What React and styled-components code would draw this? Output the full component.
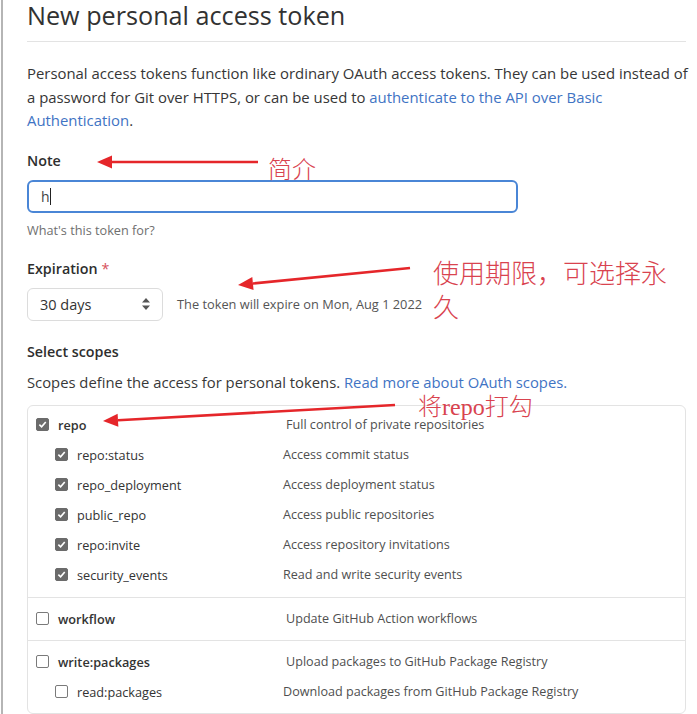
import React from 'react';
import styled, { createGlobalStyle } from 'styled-components';

const GlobalStyle = createGlobalStyle`
  body {
    margin: 0;
    background: #fff;
    font-family: "Open Sans", "Noto Sans", Arial, sans-serif;
    color: #333;
  }
`

const Root = styled.div`
  position: relative;
  width: 697px;
  height: 714px;
  overflow: hidden;
`

const Page = styled.div`
  height: 100%;
  border-left: 2px solid #b5b5b5;
  margin-left: 1px;
  padding: 0 11px 0 24px;
`

const Title = styled.h1`
  margin: 0;
  padding-bottom: 11px;
  border-bottom: 1px solid #e3e3e3;
  font-size: 25.2px;
  line-height: 30px;
  font-weight: 400;
  color: #323232;
`

const Intro = styled.p`
  margin: 20px -5px 0 0;
  font-size: 14.9px;
  line-height: 23.5px;
  color: #363636;
`

const Link = styled.a`
  color: #3f74c4;
  text-decoration: none;
`

const Label = styled.div`
  margin-top: ${p => p.$gap || 18}px;
  font-size: 14.3px;
  line-height: 20px;
  font-weight: 600;
  color: #2e2e2e;
`

const Required = styled.span`
  color: #d6505a;
  font-weight: 400;
`

const TextBox = styled.div`
  box-sizing: border-box;
  margin-top: 9px;
  width: 491px;
  height: 33px;
  border: 2px solid #4a86d6;
  border-radius: 6px;
  padding: 0 12px;
  display: flex;
  align-items: center;
  font-size: 14px;
  color: #444;
`

const Caret = styled.span`
  display: inline-block;
  width: 1px;
  height: 17px;
  background: #222;
`

const Hint = styled.div`
  margin-top: 8px;
  font-size: 12.7px;
  line-height: 18px;
  color: #6f6f6f;
`

const SelectRow = styled.div`
  margin-top: 9px;
  display: flex;
  align-items: center;
  gap: 14px;
`

const Select = styled.div`
  box-sizing: border-box;
  width: 136px;
  height: 33px;
  border: 1px solid #dcdcdc;
  border-radius: 6px;
  padding: 0 12px;
  display: flex;
  align-items: center;
  justify-content: space-between;
  font-size: 14.5px;
  color: #333;
`

const SelectArrows = styled.svg`
  width: 8px;
  height: 12px;
  fill: #555;
`

const Expire = styled.span`
  font-size: 12.8px;
  color: #555;
`

const Text = styled.div`
  margin-top: ${p => p.$gap || 10}px;
  font-size: 14.8px;
  line-height: 20px;
  color: #383838;
`

const ScopeBox = styled.div`
  margin-top: 13px;
  border: 1px solid #e3e3e3;
  border-radius: 6px;
`

const Group = styled.div`
  padding: 4px 0 6px;
  &:first-child {
    padding-bottom: 7px;
  }
  & + & {
    border-top: 1px solid #e3e3e3;
    padding-top: 6px;
  }
`

const Row = styled.div`
  display: grid;
  grid-template-columns: ${p => p.$child ? '228px' : '250px'} 1fr;
  height: 30px;
  align-items: center;
  padding-left: ${p => p.$child ? 27 : 8}px;
`

const ScopeName = styled.label`
  display: flex;
  align-items: center;
  gap: 9px;
  font-size: 12.7px;
  font-weight: ${p => p.$child ? 400 : 600};
  color: #333;
`

const Box = styled.span`
  box-sizing: border-box;
  width: 13px;
  height: 13px;
  border-radius: 2px;
  border: 1px solid ${p => p.$on ? '#6b6b6b' : '#7a7a7a'};
  background: ${p => p.$on ? '#6b6b6b' : '#fff'};
  display: flex;
  align-items: center;
  justify-content: center;
`

const ScopeDesc = styled.span`
  font-size: 12.6px;
  color: #4f4f4f;
`

const Overlay = styled.svg`
  position: absolute;
  left: 0;
  top: 0;
  pointer-events: none;
`

const Note = styled.div`
  position: absolute;
  left: ${p => p.$x}px;
  top: ${p => p.$y}px;
  font-family: "Liberation Serif", "Noto Sans CJK SC", serif;
  font-size: ${p => p.$size || 24}px;
  font-weight: 300;
  line-height: ${p => p.$lh || 30}px;
  color: #d9434f;
  white-space: nowrap;
`

function Checkbox({ on }) {
  return (
    <Box $on={on}>
      {on && (
        <svg width="9" height="9" viewBox="0 0 10 10">
          <path d="M1.5 5.2 L4 7.6 L8.6 2.2" fill="none" stroke="#fff" strokeWidth="1.8" />
        </svg>
      )}
    </Box>
  )
}

function Scope({ name, desc, on, child }) {
  return (
    <Row $child={child}>
      <ScopeName $child={child}>
        <Checkbox on={on} />
        {name}
      </ScopeName>
      <ScopeDesc>{desc}</ScopeDesc>
    </Row>
  )
}

function Arrow({ x1, y1, x2, y2 }) {
  // arrow pointing from (x1,y1) to the tip (x2,y2)
  const a = Math.atan2(y2 - y1, x2 - x1)
  const len = 15, half = 6.5
  const bx = x2 - len * Math.cos(a), by = y2 - len * Math.sin(a)
  const px = -Math.sin(a) * half, py = Math.cos(a) * half
  return (
    <g>
      <line x1={x1} y1={y1} x2={bx} y2={by} stroke="#e5262a" strokeWidth="2.6" />
      <polygon points={`${x2},${y2} ${bx + px},${by + py} ${bx - px},${by - py}`} fill="#e5262a" />
    </g>
  )
}

const repoChildren = [
  ['repo:status', 'Access commit status'],
  ['repo_deployment', 'Access deployment status'],
  ['public_repo', 'Access public repositories'],
  ['repo:invite', 'Access repository invitations'],
  ['security_events', 'Read and write security events'],
]

function App() {
  return (
    <React.Fragment>
      <GlobalStyle />
      <Root>
        <Page>
          <Title>New personal access token</Title>
          <Intro>
            Personal access tokens function like ordinary OAuth access tokens. They can be used instead of
            a password for Git over HTTPS, or can be used to <Link href="#">authenticate to the API over Basic Authentication</Link>.
          </Intro>

          <Label>Note</Label>
          <TextBox>h<Caret /></TextBox>
          <Hint>What's this token for?</Hint>

          <Label $gap={20}>Expiration <Required>*</Required></Label>
          <SelectRow>
            <Select>
              30 days
              <SelectArrows viewBox="0 0 8 12">
                <path d="M4 0 L8 4.5 H0 Z M4 12 L8 7.5 H0 Z" />
              </SelectArrows>
            </Select>
            <Expire>The token will expire on Mon, Aug 1 2022</Expire>
          </SelectRow>

          <Label $gap={21}>Select scopes</Label>
          <Text>
            Scopes define the access for personal tokens. <Link href="#">Read more about OAuth scopes.</Link>
          </Text>

          <ScopeBox>
            <Group>
              <Scope name="repo" desc="Full control of private repositories" on />
              {repoChildren.map(([n, d]) => (
                <Scope key={n} name={n} desc={d} on child />
              ))}
            </Group>
            <Group>
              <Scope name="workflow" desc="Update GitHub Action workflows" />
            </Group>
            <Group>
              <Scope name="write:packages" desc="Upload packages to GitHub Package Registry" />
              <Scope name="read:packages" desc="Download packages from GitHub Package Registry" child />
            </Group>
          </ScopeBox>
        </Page>

        <Overlay width="697" height="714">
          <Arrow x1={258} y1={162} x2={97} y2={162} />
          <Arrow x1={410} y1={268} x2={238} y2={285} />
          <Arrow x1={395} y1={405} x2={103} y2={421} />
        </Overlay>
        <Note $x={268} $y={155}>简介</Note>
        <Note $x={433} $y={258} $size={26} $lh={34}>使用期限，可选择永<br />久</Note>
        <Note $x={418} $y={392}>将repo打勾</Note>
      </Root>
    </React.Fragment>
  )
}

export default App;
